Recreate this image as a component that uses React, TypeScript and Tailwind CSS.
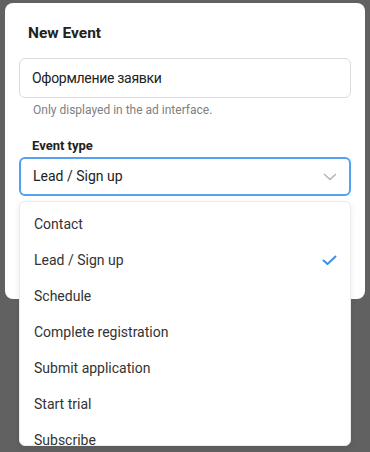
import React from "react";

const items = [
  "Contact",
  "Lead / Sign up",
  "Schedule",
  "Complete registration",
  "Submit application",
  "Start trial",
  "Subscribe",
];

export default function App() {
  return (
    <div
      className="relative w-[370px] h-[452px] overflow-hidden bg-[#616161] pt-[3px] pl-[5px]"
      style={{ fontFamily: "Roboto, 'Noto Sans', sans-serif" }}
    >
      <div className="w-[360px] h-[296px] bg-white rounded-[8px] px-[14px] pt-[20px]">
        <h2 className="pl-[9px] text-[15.5px] font-bold leading-[20px] text-[#222]">New Event</h2>
        <div className="mt-[15px] h-[40px] w-[332px] rounded-[6px] border border-[#dcdcdc] flex items-center pl-[12px] text-[14px] tracking-[-0.3px] text-[#222]">
          Оформление заявки
        </div>
        <p className="mt-[5px] pl-[14px] text-[12px] leading-[14px] text-[#808080]">
          Only displayed in the ad interface.
        </p>
        <div className="mt-[20px] flex">
          <span className="ml-[13px] text-[13px] font-bold leading-[18px] text-[#222]">Event type</span>
        </div>
        <div className="relative mt-[2px] w-[332px]">
          <div className="h-[39px] rounded-[6px] border-2 border-[#55a0f0] flex items-center justify-between pl-[12px] pr-[12px] text-[14px] text-[#222]">
            <span>Lead / Sign up</span>
            <svg width="14" height="8" viewBox="0 0 14 8" fill="none">
              <path d="M1.5 1.5 L7 6.5 L12.5 1.5" stroke="#b5b5b5" strokeWidth="1.6" strokeLinecap="round" strokeLinejoin="round" />
            </svg>
          </div>
          <div className="absolute left-0 top-[44px] w-[332px] h-[245px] overflow-hidden rounded-[6px] border border-[#ececec] bg-white shadow-[0_2px_6px_rgba(0,0,0,0.08)] pt-[4px] z-10">
            {items.map((it) => (
              <div key={it} className="h-[36px] flex items-center justify-between pl-[14px] pr-[13px] text-[14px] text-[#333]">
                <span>{it}</span>
                {it === "Lead / Sign up" && (
                  <svg width="15" height="11" viewBox="0 0 15 11" fill="none">
                    <path d="M1.5 5.5 L5.5 9 L13.5 1.5" stroke="#3d8fe8" strokeWidth="2" strokeLinecap="round" strokeLinejoin="round" />
                  </svg>
                )}
              </div>
            ))}
          </div>
        </div>
      </div>
    </div>
  );
}
